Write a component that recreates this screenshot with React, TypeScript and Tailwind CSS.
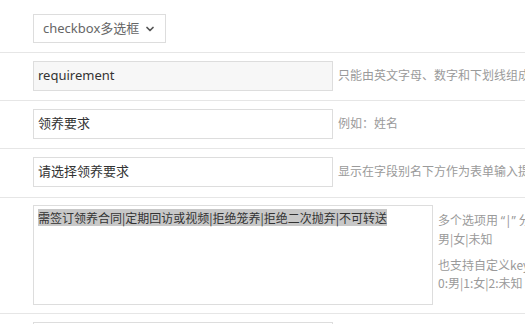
import { ChevronDown } from "lucide-react";

const font = { fontFamily: '"Noto Sans", "Noto Sans CJK SC", sans-serif' };
const cjk = { fontFamily: '"Noto Sans CJK SC", "Noto Sans", sans-serif' };

function Help({ children }: { children: React.ReactNode }) {
  return <div className="ml-[5px] whitespace-nowrap text-[12px] leading-[30px] text-[#9a9a9a]">{children}</div>;
}

export default function App() {
  return (
    <div className="h-[324px] w-[525px] overflow-hidden bg-white" style={font}>
      {/* Field type */}
      <div className="border-b border-[#e6e6e6] pb-[9px] pl-[33px] pt-[14px]">
        <div className="flex h-[29px] w-[133px] items-center gap-[5px] border border-[#ddd] pl-[9px] text-[13px] text-[#666]">
          <span>checkbox多选框</span>
          <ChevronDown size={12} strokeWidth={3.5} className="text-[#555]" />
        </div>
      </div>

      {/* Field name */}
      <div className="flex items-start border-b border-[#e6e6e6] pb-[9px] pl-[33px] pt-2">
        <div className="flex h-[30px] w-[300px] shrink-0 items-center border border-[#ddd] bg-[#f7f7f7] px-[4px] text-[13px] text-[#333]">
          requirement
        </div>
        <Help>只能由英文字母、数字和下划线组成</Help>
      </div>

      {/* Alias */}
      <div className="flex items-start border-b border-[#e6e6e6] pb-[9px] pl-[33px] pt-2">
        <div className="flex h-[30px] w-[300px] shrink-0 items-center border border-[#ddd] px-[4px] text-[13px] text-[#333]">
          领养要求
        </div>
        <Help>例如：姓名</Help>
      </div>

      {/* Placeholder */}
      <div className="flex items-start border-b border-[#e6e6e6] pb-[10px] pl-[33px] pt-2">
        <div className="flex h-[30px] w-[300px] shrink-0 items-center border border-[#ddd] px-[4px] text-[13px] text-[#333]">
          请选择领养要求
        </div>
        <Help>显示在字段别名下方作为表单输入提示</Help>
      </div>

      {/* Options */}
      <div className="flex items-start border-b border-[#e6e6e6] pb-[8px] pl-[33px] pt-[7px]" style={cjk}>
        <div className="h-[100px] w-[400px] shrink-0 border border-[#ddd] px-[4px] pt-[2px] text-[12px] leading-[20px] text-[#333]">
          <span className="bg-[#c8c8c8]">需签订领养合同|定期回访或视频|拒绝笼养|拒绝二次抛弃|不可转送</span>
        </div>
        <div className="ml-[5px] whitespace-nowrap pt-[6px] text-[12px] leading-[18px] text-[#9a9a9a]">
          <p>
            多个选项用 <span style={font}>“|”</span> 分隔，如：
          </p>
          <p>男|女|未知</p>
          <p className="mt-[8px]">也支持自定义key:value形式，如：</p>
          <p>0:男|1:女|2:未知</p>
        </div>
      </div>

      {/* Next field */}
      <div className="pl-[33px] pt-2">
        <div className="h-[30px] w-[300px] border border-[#ddd]" />
      </div>
    </div>
  );
}
